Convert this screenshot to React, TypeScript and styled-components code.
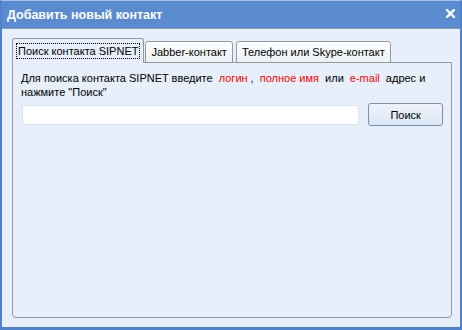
import React from 'react';
import styled, {createGlobalStyle} from 'styled-components';

const Global = createGlobalStyle`
	html, body {
		margin:0;
		padding:0;
		background:#e6effb;
	}
	* { box-sizing:border-box; }
`;

const Window = styled.div`
	width:462px;
	height:330px;
	display:flex;
	flex-direction:column;
	background:#e6effb;
	border-left:2px solid #4f82cc;
	border-right:2px solid #4f82cc;
	border-bottom:3px solid #4f82cc;
	border-top:1px solid #a9bfe0;
	font-family:"Liberation Sans", Arial, sans-serif;
`;

const TitleBar = styled.div`
	height:28px;
	display:flex;
	align-items:center;
	justify-content:space-between;
	padding:0 5px 0 5px;
	background:#5a8bd1;
	border-bottom:1px solid #8a99ad;
	color:#fff;
	font-weight:bold;
	font-size:12.5px;
`;

const Close = styled.svg`
	width:9px;
	height:9px;
	margin-top:-3px;
`;

const Body = styled.div`
	flex:1;
	display:flex;
	flex-direction:column;
	padding:8px 8px 9px 10px;
`;

const TabRow = styled.div`
	display:flex;
	align-items:flex-end;
	height:25px;
	position:relative;
	z-index:1;
`;

const Tab = styled.div<{active?:boolean}>`
	height:${props => props.active ? '25px' : '22px'};
	padding:0 ${props => props.active ? '4px' : '5px'};
	margin-right:${props => props.active ? '1px' : '3px'};
	display:flex;
	align-items:center;
	font-size:11px;
	color:#000;
	background:${props => props.active ? '#e6effb' : 'linear-gradient(#ffffff, #ecf0f5)'};
	border:1px solid #919b9c;
	border-bottom:${props => props.active ? '1px solid #e6effb' : '1px solid #919b9c'};
	border-radius:3px 3px 0 0;
	margin-bottom:-1px;
`;

const Focus = styled.span`
	outline:1px dotted #000;
	padding:0 1px;
	line-height:14px;
`;

const Panel = styled.div`
	flex:1;
	border:1px solid #919b9c;
	border-radius:0 0 4px 4px;
	padding:8px 8px 0 8px;
	font-size:11px;
	color:#000;
`;

const Hint = styled.div`
	line-height:14px;
	white-space:nowrap;
`;

const Red = styled.span`
	color:#ff0000;
	padding:0 3px;
`;

const SearchRow = styled.div`
	display:flex;
	align-items:center;
	margin-top:4px;
	gap:9px;
`;

const Input = styled.input`
	width:339px;
	height:20px;
	border:1px solid #d9e4f3;
	background:#fff;
	margin-left:1px;
`;

const Button = styled.button`
	width:75px;
	height:23px;
	border:1px solid #7b8fa8;
	border-radius:3px;
	background:linear-gradient(#eef3fb, #dce7f6);
	font-family:"Liberation Sans", Arial, sans-serif;
	font-size:11px;
	color:#000;
	padding:0;
`;

export default function App(){
	return (
		<>
			<Global/>
			<Window>
				<TitleBar>
					<span>Добавить новый контакт</span>
					<Close viewBox="0 0 9 9">
						<path d="M1 1 L8 8 M8 1 L1 8" stroke="#fff" strokeWidth="2.4" strokeLinecap="square"/>
					</Close>
				</TitleBar>
				<Body>
					<TabRow>
						<Tab active><Focus>Поиск контакта SIPNET</Focus></Tab>
						<Tab>Jabber-контакт</Tab>
						<Tab>Телефон или Skype-контакт</Tab>
					</TabRow>
					<Panel>
						<Hint>
							Для поиска контакта SIPNET введите <Red>логин</Red>, <Red>полное имя</Red> или <Red>e-mail</Red> адрес и<br/>
							нажмите "Поиск"
						</Hint>
						<SearchRow>
							<Input/>
							<Button>Поиск</Button>
						</SearchRow>
					</Panel>
				</Body>
			</Window>
		</>
	);
}
